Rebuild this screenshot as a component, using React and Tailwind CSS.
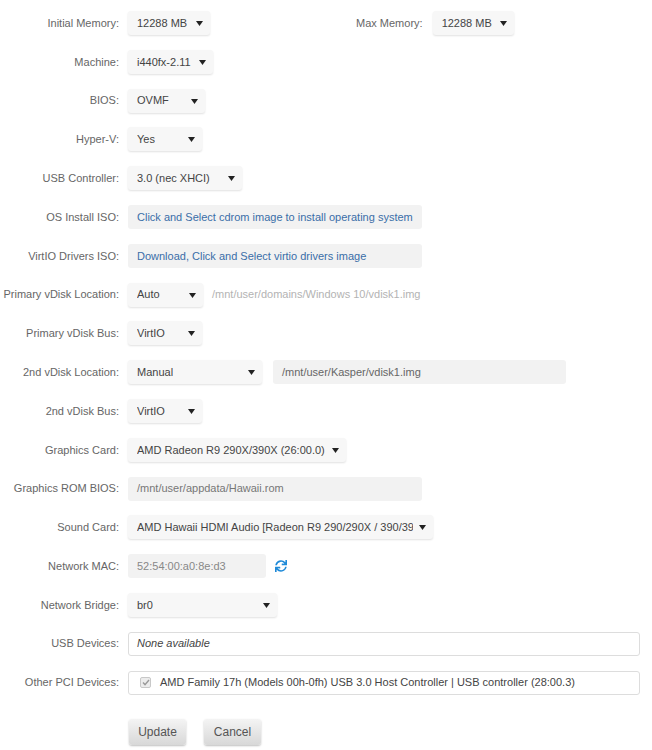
import { FaSync } from "react-icons/fa";

function Row({ label, children }) {
  return (
    <div className="flex h-[38.8px] items-center">
      <div className="w-[120px] shrink-0 pr-px text-right text-[#666]">{label}</div>
      <div className="ml-2 flex min-w-0 flex-1 items-center">{children}</div>
    </div>
  );
}

function Select({ value, width }) {
  return (
    <div
      className="relative flex h-6 shrink-0 items-center rounded-[3px] bg-[#f7f7f7] pl-[9px] pr-5 text-[#444] shadow-[0_1px_2px_rgba(0,0,0,0.12)]"
      style={{ width }}
    >
      <span className="overflow-hidden whitespace-nowrap">{value}</span>
      <svg className="absolute right-[7px] top-[10px]" width="7" height="5" viewBox="0 0 7 5">
        <path d="M0 0h7L3.5 5z" fill="#222" />
      </svg>
    </div>
  );
}

function Field({ value, width, color = "text-[#666]" }) {
  return (
    <div
      className={`flex h-6 shrink-0 items-center rounded-[3px] bg-[#f2f2f2] pl-[9px] whitespace-nowrap ${color}`}
      style={{ width }}
    >
      {value}
    </div>
  );
}

export default function App() {
  return (
    <div className="min-h-[750px] w-[652px] bg-white pt-[3.6px] text-[11px] font-['Liberation_Sans',Arial,sans-serif]">
      <Row label="Initial Memory:">
        <Select value="12288 MB" width={82} />
        <span className="ml-[146px] text-[#666]">Max Memory:</span>
        <div className="ml-[10px]">
          <Select value="12288 MB" width={81} />
        </div>
      </Row>
      <Row label="Machine:">
        <Select value="i440fx-2.11" width={85} />
      </Row>
      <Row label="BIOS:">
        <Select value="OVMF" width={77} />
      </Row>
      <Row label="Hyper-V:">
        <Select value="Yes" width={74} />
      </Row>
      <Row label="USB Controller:">
        <Select value="3.0 (nec XHCI)" width={114} />
      </Row>
      <Row label="OS Install ISO:">
        <Field value="Click and Select cdrom image to install operating system" width={294} color="text-[#3a6ea8]" />
      </Row>
      <Row label="VirtIO Drivers ISO:">
        <Field value="Download, Click and Select virtio drivers image" width={294} color="text-[#3a6ea8]" />
      </Row>
      <Row label="Primary vDisk Location:">
        <Select value="Auto" width={75} />
        <span className="ml-[9px] whitespace-nowrap text-[#b3b3b3]">/mnt/user/domains/Windows 10/vdisk1.img</span>
      </Row>
      <Row label="Primary vDisk Bus:">
        <Select value="VirtIO" width={74} />
      </Row>
      <Row label="2nd vDisk Location:">
        <Select value="Manual" width={134} />
        <div className="ml-[11px]">
          <Field value="/mnt/user/Kasper/vdisk1.img" width={293} />
        </div>
      </Row>
      <Row label="2nd vDisk Bus:">
        <Select value="VirtIO" width={74} />
      </Row>
      <Row label="Graphics Card:">
        <Select value="AMD Radeon R9 290X/390X (26:00.0)" width={218} />
      </Row>
      <Row label="Graphics ROM BIOS:">
        <Field value="/mnt/user/appdata/Hawaii.rom" width={294} color="text-[#777]" />
      </Row>
      <Row label="Sound Card:">
        <Select value="AMD Hawaii HDMI Audio [Radeon R9 290/290X / 390/390X]" width={305} />
      </Row>
      <Row label="Network MAC:">
        <Field value="52:54:00:a0:8e:d3" width={138} color="text-[#888]" />
        <FaSync className="ml-[9px] text-[#1f8ad8]" size={12} />
      </Row>
      <Row label="Network Bridge:">
        <Select value="br0" width={149} />
      </Row>
      <Row label="USB Devices:">
        <div className="flex h-6 w-[512px] items-center rounded-[3px] border border-[#ddd] bg-white pl-[8px] italic text-[#444]">
          None available
        </div>
      </Row>
      <Row label="Other PCI Devices:">
        <div className="flex h-6 w-[512px] items-center rounded-[3px] border border-[#ddd] bg-white pl-[11px] text-[#444]">
          <span className="flex h-[11px] w-[11px] items-center justify-center rounded-[2px] border border-[#c8c8c8] bg-[#ececec]">
            <svg width="8" height="7" viewBox="0 0 8 7">
              <path d="M1 3.6 3 5.6 7 1" stroke="#999" strokeWidth="1.4" fill="none" />
            </svg>
          </span>
          <span className="ml-[9px] whitespace-nowrap">
            AMD Family 17h (Models 00h-0fh) USB 3.0 Host Controller | USB controller (28:00.3)
          </span>
        </div>
      </Row>
      <div className="ml-[129px] mt-[17px] flex gap-[18px]">
        <button className="h-[26px] w-[57px] rounded-[3px] bg-gradient-to-b from-[#f4f4f4] to-[#d8d8d8] text-[12px] text-[#555] shadow-[0_1px_2px_rgba(0,0,0,0.25)]">
          Update
        </button>
        <button className="h-[26px] w-[57px] rounded-[3px] bg-gradient-to-b from-[#f4f4f4] to-[#d8d8d8] text-[12px] text-[#555] shadow-[0_1px_2px_rgba(0,0,0,0.25)]">
          Cancel
        </button>
      </div>
    </div>
  );
}
